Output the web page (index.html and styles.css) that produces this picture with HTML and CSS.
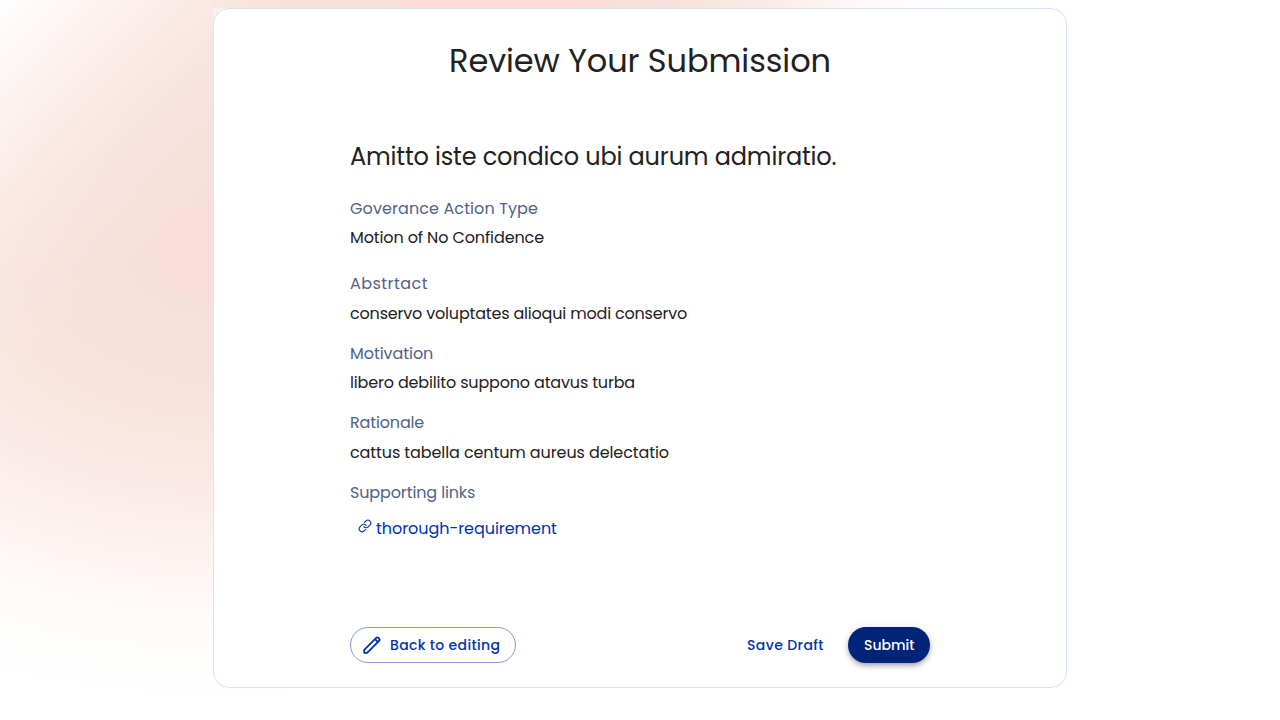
FILE: index.html
```html
<!DOCTYPE html>
<html lang="en">
<head>
<meta charset="utf-8">
<title>Review Your Submission</title>
<link rel="stylesheet" href="styles.css">
</head>
<body>
<main class="card">
  <h1 class="title">Review Your Submission</h1>
  <div class="content">
    <h2 class="name">Amitto iste condico ubi aurum admiratio.</h2>
    <dl class="fields">
      <div class="field field-type"><dt class="t-type">Goverance Action Type</dt><dd class="t-motion">Motion of No Confidence</dd></div>
      <div class="field field-abstract"><dt class="t-abstract">Abstrtact</dt><dd class="t-conservo">conservo voluptates alioqui modi conservo</dd></div>
      <div class="field field-motivation"><dt class="t-motivation">Motivation</dt><dd class="t-libero">libero debilito suppono atavus turba</dd></div>
      <div class="field field-rationale"><dt class="t-rationale">Rationale</dt><dd class="t-cattus">cattus tabella centum aureus delectatio</dd></div>
      <div class="field"><dt class="t-links">Supporting links</dt></div>
    </dl>
    <a class="link">
      <svg class="link-icon" width="14" height="14" viewBox="0 0 24 24" fill="none" stroke="currentColor" stroke-width="1.9" stroke-linecap="round"><path d="M10 13a5 5 0 0 0 7.54.54l3-3a5 5 0 0 0-7.07-7.07l-2.4 2.4M14 11a5 5 0 0 0-7.54-.54l-3 3a5 5 0 0 0 7.07 7.07l2.4-2.4"/></svg>
      <span class="t-thorough">thorough-requirement</span>
    </a>
    <div class="actions">
      <button class="btn btn-outline">
        <svg width="20" height="20" viewBox="0 0 20 20" fill="none" stroke="currentColor" stroke-width="1.8" stroke-linejoin="round"><path d="M2.2 14.9 14.2 2.9Q15.3 1.8 16.4 2.9L17.1 3.6Q18.2 4.7 17.1 5.8L5.1 17.8H2.2ZM13 4.1 15.9 7"/></svg>
        <span class="t-back">Back to editing</span>
      </button>
      <button class="btn btn-text"><span class="t-save">Save Draft</span></button>
      <button class="btn btn-primary"><span class="t-submit">Submit</span></button>
    </div>
  </div>
</main>
</body>
</html>
```

FILE: styles.css
```css
* { box-sizing: border-box; }
body {
  margin: 0;
  height: 720px;
  padding-top: 8px;
  overflow: hidden;
  font-family: Poppins, Inter, sans-serif;
  color: #212121;
  background:
    linear-gradient(90deg, #f9e7e2 0, #f9e6df 17px, #f8e0db 90px, #f8e2da 175px, #fbdcd8 205px, #fbdcd8 375px, #f8e0da 400px, #f8e0dc 445px, #f9e6de 500px, #fbece9 567px, #fef6f4 627px, #fffcfb 687px, #fff 737px) 213px 0 / 853px 8px no-repeat,
    radial-gradient(ellipse 70px 54px at 222px 250px, #fbddd9 0, #fbddd9 85%, rgba(251,221,217,0) 100%),
    linear-gradient(135deg, rgba(255,255,255,.97) 0, rgba(255,255,255,.82) 28px, rgba(255,255,255,.6) 70px, rgba(255,255,255,.44) 106px, rgba(255,255,255,.28) 141px, rgba(255,255,255,.14) 185px, rgba(255,255,255,.06) 230px, rgba(255,255,255,0) 290px),
    radial-gradient(ellipse 650px 900px at 220px 250px, #f8e0da 0%, #f7e0da 12%, #f8e1db 24%, #f9e3dd 34%, #f9e5e0 39%, #fae7e4 50%) 0 0 / 213px 250px no-repeat,
    radial-gradient(ellipse 650px 460px at 220px 250px, #f8e0da 0%, #f7e0da 12%, #f8e1db 24%, #f9e3dd 34%, #f9e6de 39%, #fae9e6 50%, #fdf3f1 67%, #fffbfa 80%, #fefefd 90%, #fff 100%);
}
.card {
  width: 854px;
  height: 680px;
  margin: 0 auto;
  padding: 28px 136px 0;
  background: #fff;
  border: 1px solid #d6e2ff;
  border-radius: 16px;
}
h1, h2, dl, dd { margin: 0; font-weight: 400; }
.title { font-size: 32px; line-height: 48px; letter-spacing: -.09px; text-align: center; white-space: nowrap; }
.name { margin-top: 54px; font-size: 24px; line-height: 36px; letter-spacing: -.15px; white-space: nowrap; }
.fields { margin-top: 22px; font-size: 16px; }
.field { line-height: 24px; }
.field-type { margin-bottom: 22px; }
.field-type dd { margin-top: 5px; }
.field-abstract { margin-bottom: 16px; }
.field-motivation { margin-bottom: 16px; }
.field-motivation dd { margin-top: 5px; }
.field-rationale { margin-bottom: 16px; }
dt { color: #506288; }
dd { margin-top: 6px; }
dt, dd, .link { width: max-content; }
.t-type { letter-spacing: .095px; }
.t-motion { letter-spacing: -.12px; }
.t-abstract { letter-spacing: .45px; }
.t-conservo { letter-spacing: -.185px; }
.t-motivation { letter-spacing: -.05px; }
.t-libero { letter-spacing: -.165px; }
.t-rationale { letter-spacing: -.15px; }
.t-cattus { letter-spacing: -.1px; }
.t-links { letter-spacing: -.13px; }
.t-thorough { letter-spacing: -.05px; }
.t-back { letter-spacing: .34px; }
.t-save { letter-spacing: .4px; }
.link { display: flex; gap: 4px; margin: 12px 0 0 8px; line-height: 24px; color: #0033ad; }
.link-icon { margin-top: 2px; }
.actions { display: flex; align-items: center; margin-top: 86px; width: 580px; }
.btn {
  display: flex;
  align-items: center;
  height: 36px;
  padding: 0 16px;
  border: 0;
  border-radius: 18px;
  background: none;
  color: #0033ad;
  font: 500 14px/24px Poppins, Inter, sans-serif;
  white-space: nowrap;
}
.btn-outline { width: 166px; padding: 0 11px; gap: 8px; border: 1px solid #8099d6; }
.btn-text { width: 109px; margin-left: auto; }
.btn-primary { width: 82px; margin-left: 8px; color: #fff; background: #00247a; box-shadow: 0 2px 4px -1px rgba(0,0,0,.2), 0 4px 5px rgba(0,0,0,.14), 0 1px 10px rgba(0,0,0,.12); }
```
